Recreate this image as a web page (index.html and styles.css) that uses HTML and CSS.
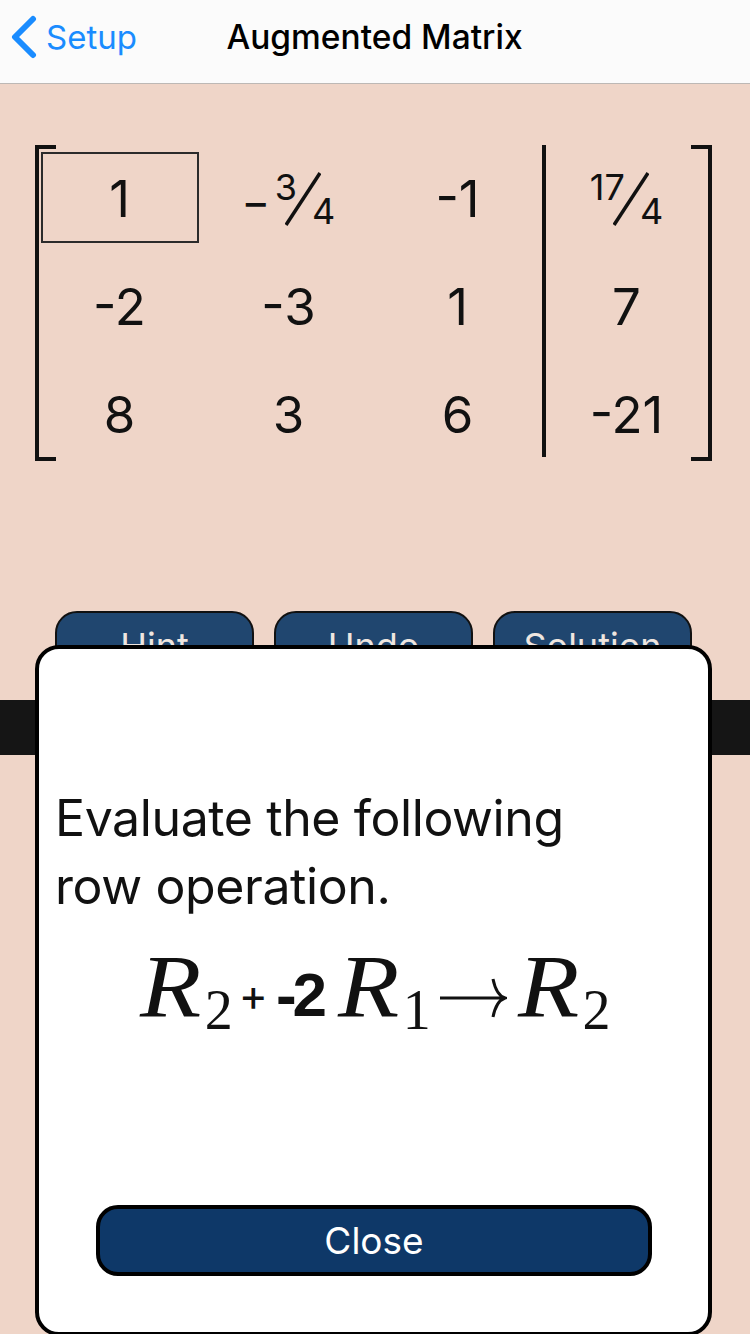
FILE: index.html
```html
<!DOCTYPE html>
<html lang="en">
<head>
<meta charset="UTF-8" />
<meta name="viewport" content="width=device-width, initial-scale=1" />
<title>Augmented Matrix</title>
<link rel="stylesheet" href="styles.css">
</head>
<body>

<div class="nav">
  <div class="back">
    <svg class="chevron" width="28" height="46" viewBox="0 0 28 46"><path d="M24 5 L6 23 L24 41" /></svg>
    <span>Setup</span>
  </div>
  <div class="nav-title">Augmented Matrix</div>
</div>

<div class="matrix">
  <div class="bracket left"></div>
  <div class="cells">
    <div class="cell selected">1</div>
    <div class="cell">
      <span class="frac"><span class="minus">–</span><span class="num">3</span><svg class="slash" width="36" height="54" viewBox="0 0 36 54"><path d="M1 53 L35 1" /></svg><span class="den">4</span></span>
    </div>
    <div class="cell">-1</div>
    <div class="cell">
      <span class="frac"><span class="num">17</span><svg class="slash" width="36" height="54" viewBox="0 0 36 54"><path d="M1 53 L35 1" /></svg><span class="den">4</span></span>
    </div>
    <div class="cell">-2</div>
    <div class="cell">-3</div>
    <div class="cell">1</div>
    <div class="cell">7</div>
    <div class="cell">8</div>
    <div class="cell">3</div>
    <div class="cell">6</div>
    <div class="cell">-21</div>
  </div>
  <div class="divider"></div>
  <div class="bracket right"></div>
</div>

<div class="actions">
  <button class="action">Hint</button>
  <button class="action">Undo</button>
  <button class="action">Solution</button>
</div>

<div class="band"></div>

<div class="modal">
  <p class="prompt">Evaluate the following row operation.</p>
  <div class="formula">
    <span class="var"><span class="r">R</span><sub>2</sub></span>
    <span class="plus">+</span>
    <span class="coef">-2</span>
    <span class="var"><span class="r">R</span><sub>1</sub></span>
    <svg class="arrow" width="68" height="40" viewBox="0 0 68 40"><path d="M1 20 H65 M54 1 C56 11 60 18 66 20 C60 22 56 29 54 39" /></svg>
    <span class="var"><span class="r">R</span><sub>2</sub></span>
  </div>
  <button class="close">Close</button>
</div>

</body>
</html>
```

FILE: styles.css
```css
html, body {
  margin: 0;
  height: 1334px;
  overflow: hidden;
}
body {
  position: relative;
  font-family: Inter, "Liberation Sans", sans-serif;
  background: #efd5c8;
  color: #111;
}
.nav {
  position: relative;
  height: 83px;
  display: flex;
  align-items: center;
  justify-content: center;
  background: #fbfbfb;
  border-bottom: 1px solid #bdb8b5;
}
.back {
  position: absolute;
  left: 9px;
  top: 14px;
  display: flex;
  align-items: center;
  gap: 9px;
  color: #1a8cff;
  font-size: 33px;
}
.chevron path {
  fill: none;
  stroke: #1a8cff;
  stroke-width: 6;
  stroke-linecap: round;
  stroke-linejoin: round;
}
.nav-title {
  font-size: 33.5px;
  font-weight: 500;
  color: #000;
  margin: -9px 1px 0 0;
}

.matrix {
  position: relative;
  height: 316px;
  margin: 61px 38px 0 35px;
}
.bracket {
  position: absolute;
  top: 0;
  bottom: 0;
  width: 17px;
  border: 4px solid #111;
}
.bracket.left {
  left: 0;
  border-right: none;
}
.bracket.right {
  right: 0;
  border-left: none;
}
.divider {
  position: absolute;
  left: 507px;
  top: 0;
  bottom: 4px;
  width: 4px;
  background: #111;
}
.cells {
  display: grid;
  grid-template-columns: repeat(4, 169px);
  grid-auto-rows: 108px;
}
.cell {
  display: flex;
  align-items: center;
  justify-content: center;
  padding-bottom: 2px;
  font-size: 51px;
}
.cell.selected {
  position: relative;
}
.cell.selected::before {
  content: "";
  position: absolute;
  left: 6px;
  top: 7px;
  box-sizing: border-box;
  width: 158px;
  height: 91px;
  border: 2px solid #2b2b2b;
}
.frac {
  display: flex;
  height: 54px;
  align-items: center;
  margin-top: 2px;
}
.frac .minus {
  font-size: 40px;
  font-weight: 500;
  margin: 6px 9px 0 4px;
}
.frac .num {
  font-size: 36px;
  align-self: flex-start;
  line-height: 30px;
  margin-right: -12px;
}
.frac .den {
  font-size: 36px;
  align-self: flex-end;
  line-height: 30px;
  margin-left: -9px;
}
.slash path {
  fill: none;
  stroke: #111;
  stroke-width: 3.5;
}

.actions {
  display: flex;
  gap: 20px;
  margin: 150px 58px 0 55px;
}
.action {
  flex: 1;
  height: 70px;
  padding: 0;
  background: #20466f;
  color: #efe6e0;
  border: 2px solid #111;
  border-radius: 22px;
  font-family: inherit;
  font-size: 36px;
}
.band {
  height: 55px;
  margin-top: 19px;
  background: #151515;
}

.modal {
  position: absolute;
  left: 35px;
  top: 645px;
  width: 669px;
  height: 683px;
  background: #fff;
  border: 4px solid #000;
  border-radius: 24px;
}
.prompt {
  margin: 135px 0 0 16px;
  width: 560px;
  font-size: 50px;
  line-height: 68px;
  letter-spacing: -0.4px;
  color: #111;
}
.formula {
  display: flex;
  align-items: baseline;
  margin: 19px 0 0 101px;
  font-family: "Liberation Serif", serif;
  color: #111;
}
.var {
  font-style: italic;
  font-size: 88px;
  line-height: 96px;
}
.r {
  display: inline-block;
  margin-right: 11px;
  transform: scaleX(1.14);
  transform-origin: left;
}
.var sub {
  font-style: normal;
  font-size: 56px;
  line-height: 0;
  vertical-align: -13px;
}
.plus {
  font-family: Inter, sans-serif;
  font-size: 44px;
  margin: 0 8px 0 6px;
  transform: translateY(-5px);
}
.coef {
  font-family: "Liberation Sans", sans-serif;
  font-weight: 700;
  font-size: 62px;
  letter-spacing: -4px;
  margin-right: 15px;
}
.arrow {
  margin: 0 11px 0 8px;
  transform: translateY(2px);
}
.arrow path {
  fill: none;
  stroke: #111;
  stroke-width: 3;
}
.close {
  position: absolute;
  left: 57px;
  top: 556px;
  width: 556px;
  height: 71px;
  background: #0e3868;
  color: #fff;
  border: 4px solid #000;
  border-radius: 22px;
  font-family: Inter, sans-serif;
  font-size: 37px;
}
```
